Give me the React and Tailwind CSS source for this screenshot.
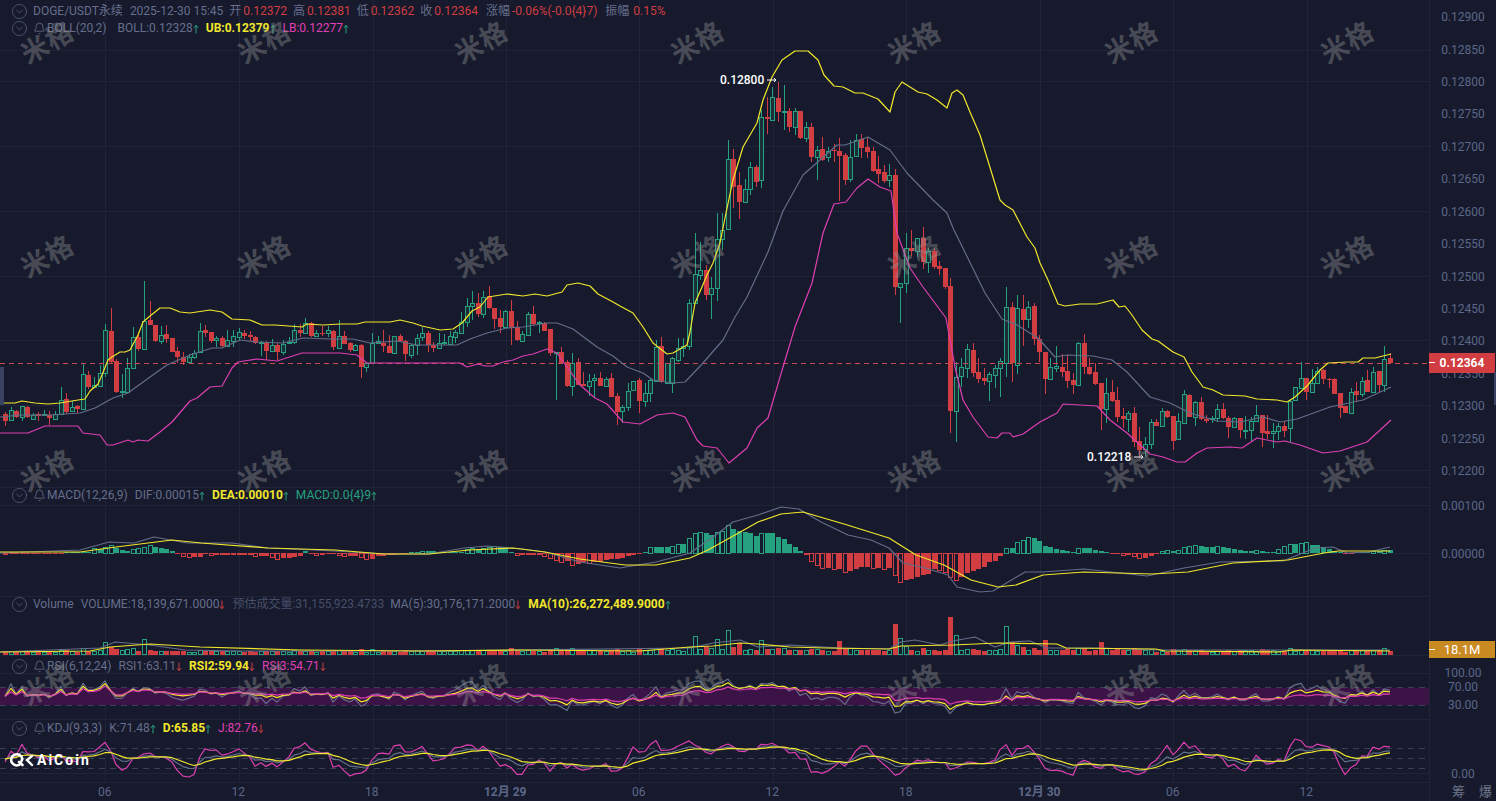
import React from 'react';
import { Bell, CircleChevronDown } from 'lucide-react';

const CANDLES = `r414,421,412,426 g410,420,407,420 r411,417,410,418 g406,417,406,421 r407,417,406,418 g415,419,413,419 r414,416,412,421 g414,415,410,415 r415,418,411,425 g414,419,411,419
g400,414,387,414 r399,412,393,414 g407,411,401,411 r406,409,405,413 g374,409,364,409 r375,387,371,389 g385,387,377,388 g373,386,365,386 g330,373,324,377 r331,362,308,363
r361,392,359,393 g391,392,374,398 g368,392,358,392 g337,368,327,368 r337,349,332,351 g321,349,281,349 r320,325,301,325 r325,341,325,342 g335,341,326,344 r334,339,325,343
r338,352,338,352 r351,357,347,363 r357,362,352,365 g357,362,354,363 g353,357,350,359 g331,352,323,352 r330,333,325,337 r332,341,332,343 g338,340,336,347 r338,346,336,347
g340,346,330,347 g336,341,330,347 g332,337,328,341 r333,336,330,339 r335,337,331,341 r337,343,336,344 g342,343,341,356 r343,351,341,360 g345,351,339,352 r345,352,343,360
g344,352,340,355 g342,343,337,344 g330,342,324,344 r330,333,324,337 g323,333,318,333 r323,336,322,337 g333,336,330,337 r333,334,326,336 g330,333,326,337 r331,347,330,350
g336,348,320,348 r336,344,331,344 r343,350,342,352 g345,350,344,351 r345,367,344,378 g363,367,363,372 g343,363,333,363 g341,343,336,344 r343,346,330,352 r346,353,335,353
g336,353,336,353 r336,341,334,342 r341,354,340,361 g345,355,344,358 g338,345,334,355 g333,337,327,341 r333,345,331,352 r345,348,342,352 g343,348,333,348 g342,343,334,345
g336,344,331,345 g332,337,330,343 g322,333,312,333 g306,322,298,327 g303,306,291,320 r303,314,293,317 g297,314,291,318 r296,308,286,309 r308,319,308,329 r318,327,310,333
g311,327,310,327 r311,327,300,345 r327,340,321,341 g334,341,331,341 g314,335,312,335 r314,324,306,325 g322,323,321,333 r323,331,322,331 r329,353,329,356 g352,353,352,400
r352,363,347,363 r362,386,360,387 g363,386,353,396 r362,385,358,385 r384,386,372,386 g381,386,374,396 g378,380,374,398 r378,386,372,386 g379,386,377,387 r378,397,373,397
r396,412,393,425 g407,411,405,423 g391,407,383,411 g381,390,381,390 r380,401,378,413 g393,401,383,407 g380,393,378,402 g347,381,340,382 r346,382,337,383 g363,383,363,383
g358,383,357,393 g348,360,338,362 g346,348,338,357 g303,346,299,350 g274,303,233,303 g270,275,242,280 r270,295,265,300 g288,294,277,319 g239,288,213,301 g230,239,213,250
g159,229,140,229 r159,187,149,208 r185,202,172,219 g189,202,179,203 g167,189,162,195 r167,182,165,187 g117,180,110,188 r117,119,97,134 g97,120,87,120 r98,112,82,122
g111,112,85,130 r111,127,108,132 g111,127,108,135 r111,138,111,139 g127,138,122,142 r127,157,123,162 g150,157,146,180 r149,160,137,161 g151,157,147,162 r150,151,144,162
r151,156,138,201 r155,180,153,185 g157,179,140,182 g140,156,134,157 r139,148,134,158 r147,152,138,158 r151,171,147,172 r169,174,156,183 r172,181,165,183 g175,180,164,187
r175,287,169,295 g283,287,283,323 g248,283,233,293 r248,251,230,256 g238,251,238,257 r238,262,227,269 g251,262,248,273 r251,267,248,269 r266,269,261,275 r268,287,268,289
r286,411,278,433 g377,411,362,442 g367,376,358,387 g349,368,344,378 r350,373,343,377 r372,379,358,383 r378,381,368,385 g374,381,372,401 g368,375,365,388 g361,368,358,397
g307,363,287,377 r307,363,302,382 g308,365,295,374 r309,320,295,346 g307,319,301,328 r306,339,303,345 r339,352,335,362 r352,379,352,394 g367,379,358,380 g366,368,346,372
r367,372,354,377 r371,381,355,388 r380,385,373,394 g343,385,342,385 r343,367,334,374 r367,374,358,375 r372,384,363,385 r383,409,383,430 g393,409,378,423 r392,401,380,402
r400,417,387,422 r416,419,408,428 g413,419,411,432 r413,442,407,447 r441,450,427,458 g444,449,437,457 g422,444,419,449 r422,426,419,426 g411,426,408,426 r411,417,410,418
r416,441,416,450 g421,439,413,439 g394,423,390,423 r395,417,394,417 g402,417,401,426 r402,419,397,420 r419,421,415,423 g418,419,416,423 g409,418,404,422 r409,418,403,419
r418,427,416,438 g418,427,417,427 r418,430,418,438 g430,431,416,439 g421,430,417,441 g415,421,405,422 r415,433,415,447 r431,434,415,439 g431,433,423,448 g426,431,423,440
r426,431,421,437 g401,428,400,443 g387,400,387,400 g378,388,362,388 r378,392,378,400 g383,392,369,392 g371,383,367,384 r370,379,369,384 r379,380,378,388 r379,394,378,394
r393,408,393,418 r406,413,406,413 g392,413,388,414 r391,395,382,402 g381,394,377,397 r380,392,370,392 g372,392,367,392 r371,385,371,392 g359,385,346,392 r358,363,353,364`
  .trim()
  .split(/\s+/)
  .map((s, i) => {
    const [top, bot, hi, lo] = s.slice(1).split(',').map(Number);
    return { up: s[0] === 'g', top, bot, hi, lo, x: Math.round(5 + 5.561 * i) };
  });

const BOLL_UB = '0,403 15,403 22,401 35,403 48,404 60,403 78,400 85,399 90,391 98,384 102,375 108,360 112,357 120,352 125,352 130,350 138,335 143,322 150,316 160,308 170,308 180,312 190,313 210,310 222,312 232,319 250,320 262,325 275,325 302,327 307,324 323,325 340,324 357,324 365,322 390,322 400,320 413,323 422,326 440,330 453,329 462,323 472,311 480,307 488,297 507,294 523,296 535,294 547,296 562,292 567,285 578,283 590,286 598,294 613,302 620,306 633,313 643,327 653,343 667,354 673,353 687,345 690,332 695,303 702,287 707,275 713,263 720,243 726,213 733,180 743,147 757,123 763,100 772,77 782,60 795,51 808,51 818,60 824,75 834,86 843,87 855,93 863,93 878,99 890,112 895,92 902,82 918,92 927,94 937,100 947,108 952,93 957,90 963,95 970,112 980,135 1000,200 1005,205 1013,210 1027,237 1035,248 1040,263 1048,280 1058,304 1065,306 1080,304 1097,304 1113,300 1119,307 1125,306 1132,315 1142,330 1152,339 1158,341 1173,352 1184,357 1192,372 1203,387 1213,390 1223,395 1245,396 1257,399 1277,400 1287,402 1295,397 1307,386 1320,370 1328,363 1347,362 1358,362 1363,358 1375,358 1391,354';
const BOLL_MID = '0,417 20,415 50,415 80,413 95,408 113,398 128,393 150,377 167,365 190,355 212,348 222,348 240,340 257,342 283,343 303,338 333,339 353,339 370,343 397,341 417,345 457,345 470,339 487,333 507,328 523,327 547,323 557,323 573,329 597,347 613,356 627,367 643,373 653,380 673,383 685,382 703,363 723,340 735,317 747,297 768,252 783,211 803,175 837,145 845,145 868,137 890,150 907,173 933,200 947,213 953,228 985,293 1002,319 1017,325 1038,338 1055,357 1067,355 1093,356 1112,360 1127,372 1150,397 1170,403 1190,413 1217,421 1240,422 1263,417 1280,422 1297,419 1330,407 1363,400 1391,387';
const BOLL_LB = '0,433 28,433 45,426 78,426 83,433 100,435 107,445 113,445 128,440 133,442 138,440 148,441 160,432 172,422 190,401 197,398 210,387 222,386 232,368 238,362 257,359 277,361 302,353 340,353 357,355 367,363 390,363 403,363 413,363 460,363 467,367 478,364 485,366 493,366 503,362 513,360 523,356 533,354 547,349 557,353 567,367 580,385 595,398 607,404 623,422 640,424 657,415 673,413 685,417 697,440 703,446 717,448 729,463 747,448 757,428 768,418 783,367 795,327 812,283 823,233 834,204 846,202 857,188 868,179 880,187 891,191 897,233 910,268 923,287 946,318 955,367 963,400 973,417 988,437 997,438 1002,433 1010,433 1013,437 1023,434 1040,422 1057,413 1063,404 1097,406 1110,420 1127,433 1150,454 1163,457 1177,462 1185,462 1197,453 1207,448 1230,447 1242,448 1257,438 1277,442 1285,441 1300,445 1323,453 1340,451 1367,442 1391,420';

const MACD_DEA = '0,552 80,552 116,547 172,540 201,543 268,548 335,550 384,554 429,554 469,550 513,548 545,552 580,559 625,565 656,565 690,558 708,550 735,535 758,522 781,514 803,512 844,524 889,538 916,555 944,565 971,580 998,587 1016,585 1043,575 1084,572 1152,574 1188,572 1233,563 1288,560 1324,553 1338,551 1390,551';
const MACD_DIF = '0,553 80,550 109,542 134,543 154,537 187,543 232,543 268,548 335,551 384,554 429,554 464,548 487,546 522,549 545,552 580,562 620,568 656,562 690,553 713,537 733,522 758,515 781,507 799,509 821,522 848,535 871,540 889,548 903,563 925,568 948,575 957,587 980,592 993,591 1025,572 1043,572 1084,569 1147,576 1184,568 1220,562 1283,561 1315,548 1333,547 1347,553 1369,552 1390,547';
const HIST = [-1,-1,-1,-1,-1,-1,-1,-1,-1,-1,-1,1,1,1,1,1,5,4,6,8,5,3,2,4,5,6,8,6,5,4,2,-1,-3,-4,-4,-4,-1,-2,-2,-2,-2,-2,-2,-2,-2,-3,-3,-3,-4,-6,-5,-5,-4,-3,2,-1,-2,-2,-1,-1,-2,-3,-3,-3,-4,-6,-6,-3,-3,-2,-2,-1,-1,1,1,2,2,2,1,1,1,1,1,4,5,3,5,6,7,6,4,1,-2,-2,-2,-2,-2,-3,-5,-7,-9,-8,-12,-11,-9,-10,-9,-9,-7,-6,-6,-5,-3,-2,-1,1,6,6,6,6,7,9,9,15,
  20,21,20,18,21,22,28,24,22,21,20,17,20,20,20,16,14,9,6,2,-2,-8,-12,-15,-15,-16,-16,-19,-18,-16,-14,-14,-15,-15,-16,-15,-22,-29,-27,-26,-24,-22,-21,-16,-17,-19,-24,-27,-24,-20,-18,-16,-14,-9,-8,-3,
  5,5,11,13,16,15,12,7,6,4,3,2,1,5,5,5,3,2,1,-1,-1,-2,-2,-3,-5,-5,-3,-1,2,3,2,3,6,7,8,7,6,6,7,6,5,4,3,2,2,3,2,1,1,4,7,9,9,10,11,8,8,6,4,2,1,-1,-1,1,1,1,2,2,3,3];

const VOL_OVERRIDE = { 18: 12, 25: 15, 124: 18, 126: 7, 128: 15, 130: 24, 132: 11, 136: 14, 150: 13, 160: 30, 161: 16, 170: 37, 171: 19, 180: 28, 181: 12, 187: 14, 197: 12 };
const VOL_MA10 = '0,652 90,651 110,647 150,644 200,647 300,650 420,651 520,650 640,651 690,647 713,646 740,643 758,644 790,647 826,648 889,649 901,646 953,645 998,643 1057,644 1066,648 1156,649 1165,651 1279,652 1292,650 1390,651';
const VOL_MA5 = '0,652 100,648 115,642 150,645 185,650 240,651 430,651 690,648 713,643 740,640 758,647 790,645 840,648 889,649 901,642 915,640 940,645 953,641 975,637 995,647 1010,642 1030,641 1047,648 1100,648 1156,650 1390,650';

const closes = CANDLES.map((c) => (c.up ? -c.top : -c.bot));

const rsiPoints = (period) => {
  let up = 1;
  let down = 1;
  return closes
    .map((close, i) => {
      const diff = i ? close - closes[i - 1] : 0;
      up = (up * (period - 1) + Math.max(diff, 0)) / period;
      down = (down * (period - 1) + Math.max(-diff, 0)) / period;
      const rsi = (100 * up) / (up + down);
      return `${CANDLES[i].x},${(687.5 + (70 - rsi) * 0.44).toFixed(1)}`;
    })
    .join(' ');
};

const kdjPoints = () => {
  let k = 50;
  let d = 50;
  const out = { k: [], d: [], j: [] };
  CANDLES.forEach((c, i) => {
    const win = CANDLES.slice(Math.max(0, i - 8), i + 1);
    const high = Math.max(...win.map((w) => -w.hi));
    const low = Math.min(...win.map((w) => -w.lo));
    const rsv = high === low ? 50 : ((closes[i] - low) / (high - low)) * 100;
    k = (2 * k + rsv) / 3;
    d = (2 * d + k) / 3;
    const y = (v) => (775 - v / 3).toFixed(1);
    out.k.push(`${c.x},${y(k)}`);
    out.d.push(`${c.x},${y(d)}`);
    out.j.push(`${c.x},${y(3 * k - 2 * d)}`);
  });
  return { k: out.k.join(' '), d: out.d.join(' '), j: out.j.join(' ') };
};

const KDJ = kdjPoints();
const TIME_X = [105, 239, 373, 506, 639, 773, 906, 1040, 1173, 1307];
const TIME_LABELS = ['06', '12', '18', '12月 29', '06', '12', '18', '12月 30', '06', '12'];
const PRICES = ['0.12900', '0.12850', '0.12800', '0.12750', '0.12700', '0.12650', '0.12600', '0.12550', '0.12500', '0.12450', '0.12400', '0.12350', '0.12300', '0.12250', '0.12200'];

const Line = ({ points, color, width = 1.2 }) => (
  <polyline points={points} fill="none" stroke={color} strokeWidth={width} strokeLinejoin="round" />
);

// one chart panel, drawn in page coordinates through the viewBox
const Panel = ({ top, height, grid, children, legend }) => (
  <div className="relative w-full shrink-0" style={{ height }}>
    <svg className="block h-full w-full" viewBox={`0 ${top} 1429 ${height}`}>
      {TIME_X.map((x) => (
        <line key={x} x1={x + 0.5} x2={x + 0.5} y1={top} y2={top + height} stroke="#1f2438" shapeRendering="crispEdges" />
      ))}
      {grid.map((y) => (
        <line key={y} x1={0} x2={1429} y1={y + 0.5} y2={y + 0.5} stroke="#1f2438" shapeRendering="crispEdges" />
      ))}
      {children}
    </svg>
    {legend}
  </div>
);

const Up = () => (
  <svg width="6" height="10" viewBox="0 0 6 10" fill="none" stroke="#26a17f" className="mt-px shrink-0">
    <path d="M3 9.5V1.5M1 3.8 3 1.2l2 2.6" />
  </svg>
);

const Down = () => (
  <svg width="6" height="10" viewBox="0 0 6 10" fill="none" stroke="#d13d40" className="mt-px shrink-0">
    <path d="M3 .5v8M1 6.2l2 2.6 2-2.6" />
  </svg>
);

const Legend = ({ top, name, bell = true, children }) => (
  <div className="absolute left-[11px] flex h-4 items-center whitespace-nowrap text-xs text-[#666e8c]" style={{ top }}>
    <CircleChevronDown size={17} strokeWidth={1} className="mr-[5px] shrink-0 text-[#5f6785]" />
    {bell && <Bell size={13} strokeWidth={1.2} className="mr-px shrink-0 text-[#7b829c]" />}
    <span className="mr-[7px]">{name}</span>
    {children}
  </div>
);

const Candles = () => (
  <g shapeRendering="crispEdges">
    {CANDLES.map((c) => {
      const color = c.up ? '#26a17f' : '#d13d40';
      return (
        <g key={c.x}>
          <line x1={c.x + 0.5} x2={c.x + 0.5} y1={c.hi} y2={c.top} stroke={color} />
          <line x1={c.x + 0.5} x2={c.x + 0.5} y1={c.bot} y2={c.lo} stroke={color} />
          {c.up ? (
            <rect x={c.x - 1.5} y={c.top + 0.5} width={4} height={Math.max(c.bot - c.top, 1)} fill="#1a2f38" stroke={color} />
          ) : (
            <rect x={c.x - 2} y={c.top} width={5} height={Math.max(c.bot - c.top, 1)} fill={color} />
          )}
        </g>
      );
    })}
  </g>
);

const MacdBars = () => (
  <g shapeRendering="crispEdges">
    {HIST.slice(0, CANDLES.length).map((v, i) => {
      const x = CANDLES[i].x;
      const color = v > 0 ? '#26a17f' : '#d13d40';
      const hollow = Math.abs(v) > Math.abs(HIST[i - 1] ?? 0);
      const y = v > 0 ? 553 - v : 553;
      const h = Math.abs(v);
      return hollow ? (
        <rect key={i} x={x - 1.5} y={y + 0.5} width={4} height={h} fill="none" stroke={color} />
      ) : (
        <rect key={i} x={x - 2} y={y} width={5} height={h} fill={color} />
      );
    })}
  </g>
);

const VolumeBars = () => (
  <g shapeRendering="crispEdges">
    {CANDLES.map((c, i) => {
      const h = VOL_OVERRIDE[i] ?? Math.round(1.5 + (c.lo - c.hi) * 0.1);
      return c.up ? (
        <rect key={i} x={c.x - 1.5} y={654.5 - h} width={4} height={h} fill="none" stroke="#26a17f" />
      ) : (
        <rect key={i} x={c.x - 2} y={654 - h} width={5} height={h + 1} fill="#d13d40" />
      );
    })}
  </g>
);

const Watermarks = () => (
  <div className="pointer-events-none absolute left-[-60px] top-[-64px] grid grid-cols-[repeat(7,216.7px)] grid-rows-[repeat(4,214px)]">
    {Array.from({ length: 28 }, (_, i) => (
      <div key={i} className="flex h-[214px] items-center justify-center">
        <span className="rotate-[-30deg] text-[27px] font-bold leading-none tracking-[1px] text-[#9a9a9a]/40">米格</span>
      </div>
    ))}
  </div>
);

const Logo = () => (
  <div className="pointer-events-none absolute left-[10px] top-[752px] flex items-center gap-[3px] text-white">
    <svg width="24" height="15" viewBox="0 0 24 15" fill="none" stroke="#fff" strokeWidth="2.6" strokeLinecap="round">
      <path d="M11 11.5 A5.6 5.6 0 1 1 12.3 7 L11.5 9" />
      <path d="M9 10 L12.5 13" />
      <path d="M22 4 L17 8 L22 13" strokeWidth="2.4" />
    </svg>
    <span className="text-[14px] font-bold leading-none tracking-[2px]">AiCoin</span>
  </div>
);

const PriceAxis = () => (
  <div className="relative flex w-[67px] shrink-0 flex-col border-l border-[#1f2438] text-center text-xs text-[#5c6789]">
    <div className="flex h-[487px] shrink-0 flex-col pt-px">
      {PRICES.map((p) => (
        <div key={p} className="flex h-[32.43px] shrink-0 items-center justify-center">{p}</div>
      ))}
    </div>
    <div className="flex h-[109px] shrink-0 flex-col pt-px">
      <div className="flex h-9 items-center justify-center">0.00100</div>
      <div className="flex h-[60px] items-center justify-center">0.00000</div>
    </div>
    <div className="h-[59px] shrink-0" />
    <div className="flex h-[64px] shrink-0 flex-col pt-[11px]">
      <div className="flex h-3.5 items-center justify-center">100.00</div>
      <div className="flex h-3.5 items-center justify-center">70.00</div>
      <div className="mt-1 flex h-3.5 items-center justify-center">30.00</div>
    </div>
    <div className="flex h-[63px] shrink-0 flex-col pt-12">
      <div className="flex h-3.5 items-center justify-center">0.00</div>
    </div>
    <div className="flex h-[19px] shrink-0 items-center justify-end gap-[14px] pr-1 text-[13px] text-[#6d7488]">
      <span>筹</span>
      <span>爆</span>
    </div>
    <div className="absolute left-[-1px] top-[353px] flex h-5 w-[66px] items-center justify-center bg-[#d13d40] text-xs font-bold text-white">
      <span className="absolute left-0 top-[9px] h-px w-1.5 bg-white" />
      0.12364
    </div>
    <div className="absolute left-[-1px] top-[641px] flex h-[17px] w-[66px] items-center justify-center bg-[#c98a22] text-[13px] text-white">
      <span className="absolute left-0 top-2 h-px w-1.5 bg-white" />
      18.1M
    </div>
    <div className="absolute right-0 top-[372px] h-[33px] w-0.5 bg-[#3a4262]" />
  </div>
);

export default function App() {
  return (
    <div className="relative flex h-[801px] w-[1496px] overflow-hidden bg-[#161a2c] font-['Roboto','Noto_Sans_CJK_SC',sans-serif]">
      <div className="flex w-[1429px] shrink-0 flex-col">
        <Panel
          top={0}
          height={487}
          grid={[50, 81, 146, 211, 276, 340, 405, 470]}
          legend={
            <>
              <Legend top={3} name="DOGE/USDT永续" bell={false}>
                <span className="mr-1.5">2025-12-30 15:45</span>
                <span className="mr-0.5">开</span><span className="mr-1.5 text-[#d13d40]">0.12372</span>
                <span className="mr-0.5">高</span><span className="mr-1.5 text-[#d13d40]">0.12381</span>
                <span className="mr-0.5">低</span><span className="mr-1.5 text-[#d13d40]">0.12362</span>
                <span className="mr-0.5">收</span><span className="mr-2 text-[#d13d40]">0.12364</span>
                <span className="mr-0.5">涨幅</span><span className="mr-2 text-[#d13d40]">-0.06%(-0.0{'{4}'}7)</span>
                <span className="mr-1">振幅</span><span className="text-[#d13d40]">0.15%</span>
              </Legend>
              <Legend top={20} name="BOLL(20,2)">
                <span className="ml-1">BOLL:0.12328</span><Up />
                <span className="ml-[7px] font-bold text-[#f1e62c]">UB:0.12379</span><Up />
                <span className="ml-[7px] text-[#e040b4]">LB:0.12277</span><Up />
              </Legend>
              <div className="absolute left-[720px] top-[72px] flex items-center gap-[3px] whitespace-nowrap text-xs font-medium text-white">
                0.12800
                <svg width="10" height="6" viewBox="0 0 10 6" fill="none" stroke="#fff"><path d="M0 3h9M7 1l2 2-2 2" /></svg>
              </div>
              <div className="absolute left-[1087px] top-[449px] flex items-center gap-[3px] whitespace-nowrap text-xs font-medium text-white">
                0.12218
                <svg width="10" height="6" viewBox="0 0 10 6" fill="none" stroke="#fff"><path d="M0 3h9M7 1l2 2-2 2" /></svg>
              </div>
              <div className="absolute left-0 top-[367px] h-[38px] w-1 bg-[#3a4262]" />
            </>
          }
        >
          <Candles />
          <line x1={0} x2={1429} y1={363.5} y2={363.5} stroke="#c94b4f" strokeDasharray="5 4" shapeRendering="crispEdges" />
          <Line points={BOLL_MID} color="#646d8a" />
          <Line points={BOLL_LB} color="#dd3fb1" />
          <Line points={BOLL_UB} color="#f1e62c" />
        </Panel>

        <Panel
          top={487}
          height={109}
          grid={[505, 553]}
          legend={
            <Legend top={0} name="MACD(12,26,9)">
              <span>DIF:0.00015</span><Up />
              <span className="ml-[7px] font-bold text-[#f1e62c]">DEA:0.00010</span><Up />
              <span className="ml-[7px] text-[#26a17f]">MACD:0.0{'{4}'}9</span><Up />
            </Legend>
          }
        >
          <line x1={0} x2={1429} y1={487.5} y2={487.5} stroke="#1f2438" shapeRendering="crispEdges" />
          <MacdBars />
          <Line points={MACD_DIF} color="#646d8a" />
          <Line points={MACD_DEA} color="#f1e62c" />
        </Panel>

        <Panel
          top={596}
          height={59}
          grid={[596]}
          legend={
            <Legend top={0} name="Volume" bell={false}>
              <span>VOLUME:18,139,671.0000</span><Down />
              <span className="ml-[7px] text-[#474e69]">预估成交量:31,155,923.4733</span>
              <span className="ml-1.5">MA(5):30,176,171.2000</span><Down />
              <span className="ml-[7px] font-bold text-[#f1e62c]">MA(10):26,272,489.9000</span><Up />
            </Legend>
          }
        >
          <VolumeBars />
          <Line points={VOL_MA5} color="#646d8a" />
          <Line points={VOL_MA10} color="#f1e62c" />
        </Panel>

        <Panel
          top={655}
          height={64}
          grid={[655, 673]}
          legend={
            <Legend top={3} name="RSI(6,12,24)">
              <span>RSI1:63.11</span><Down />
              <span className="ml-[7px] font-bold text-[#f1e62c]">RSI2:59.94</span><Down />
              <span className="ml-[7px] text-[#e040b4]">RSI3:54.71</span><Down />
            </Legend>
          }
        >
          <rect x={0} y={688} width={1429} height={17} fill="#3b1346" />
          <line x1={0} x2={1429} y1={687.5} y2={687.5} stroke="#3a4058" strokeDasharray="6 5" />
          <line x1={0} x2={1429} y1={705.5} y2={705.5} stroke="#3a4058" strokeDasharray="6 5" />
          <Line points={rsiPoints(6)} color="#646d8a" />
          <Line points={rsiPoints(12)} color="#f1e62c" />
          <Line points={rsiPoints(24)} color="#dd3fb1" />
        </Panel>

        <Panel
          top={719}
          height={63}
          grid={[719, 773]}
          legend={
            <Legend top={1} name="KDJ(9,3,3)">
              <span>K:71.48</span><Up />
              <span className="ml-[7px] font-bold text-[#f1e62c]">D:65.85</span><Up />
              <span className="ml-[7px] text-[#e040b4]">J:82.76</span><Down />
            </Legend>
          }
        >
          {[748, 758, 768].map((y) => (
            <line key={y} x1={0} x2={1429} y1={y + 0.5} y2={y + 0.5} stroke="#3a4058" strokeDasharray="6 5" />
          ))}
          <Line points={KDJ.j} color="#dd3fb1" />
          <Line points={KDJ.k} color="#646d8a" />
          <Line points={KDJ.d} color="#f1e62c" />
        </Panel>

        <div className="flex h-[19px] shrink-0 items-center border-t border-[#1f2438] pl-[38px] text-xs text-[#5c6789]">
          {TIME_LABELS.map((label, i) => (
            <span key={i} className={`w-[133.5px] shrink-0 text-center ${label.includes('月') ? 'font-bold' : ''}`}>
              {label}
            </span>
          ))}
        </div>
      </div>
      <PriceAxis />
      <Watermarks />
      <Logo />
    </div>
  );
}
